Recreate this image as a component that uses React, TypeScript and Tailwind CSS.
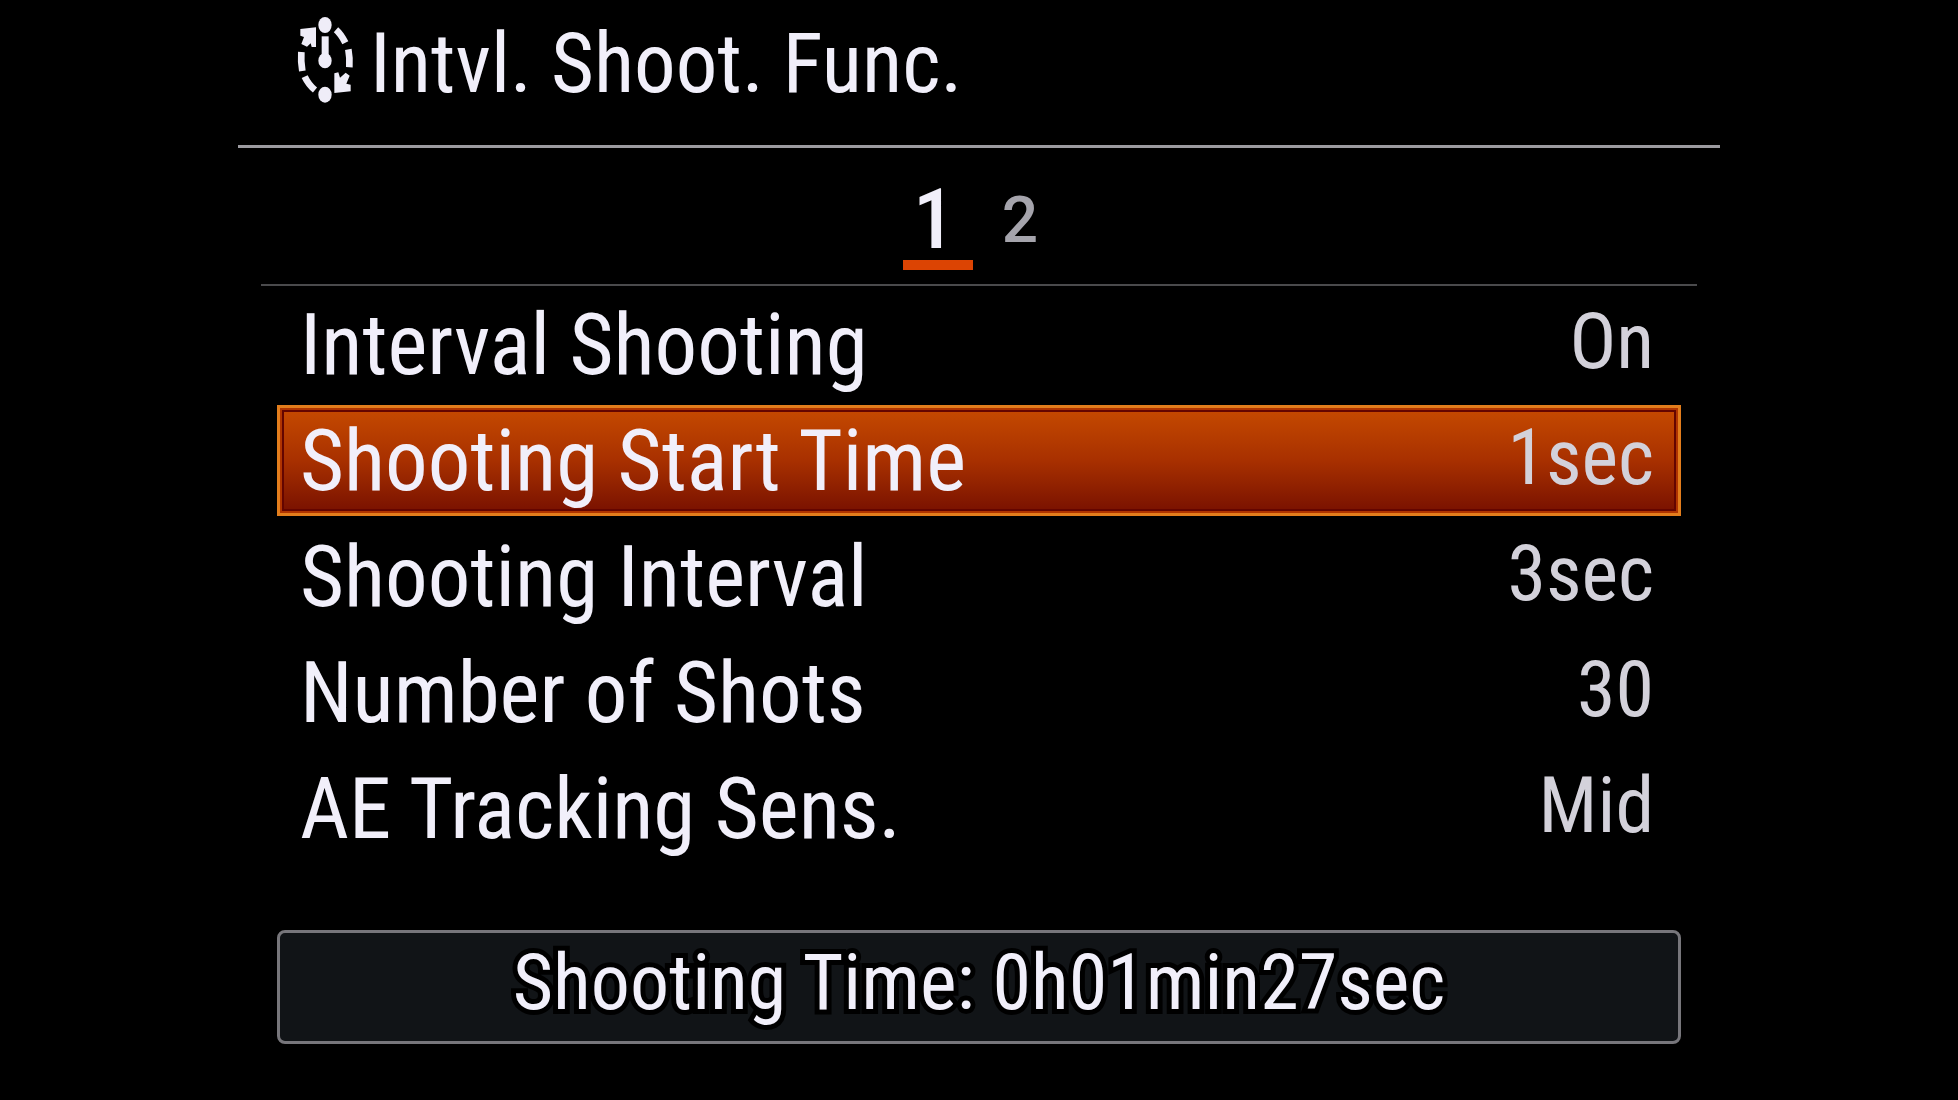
const rows = [
  { label: "Interval Shooting", value: "On" },
  { label: "Shooting Start Time", value: "1sec", selected: true },
  { label: "Shooting Interval", value: "3sec" },
  { label: "Number of Shots", value: "30" },
  { label: "AE Tracking Sens.", value: "Mid" },
];

function IntervalIcon() {
  return (
    <svg viewBox="50 50 171 264" className="h-[88px] w-[57px] shrink-0" fill="#efedf8" stroke="#efedf8" aria-hidden="true">
      <g stroke="none">
        <ellipse cx="134" cy="77" rx="20" ry="24" />
        <ellipse cx="134" cy="184" rx="20" ry="23" />
        <ellipse cx="134" cy="286" rx="20" ry="24" />
        <rect x="124" y="111" width="21" height="70" />
        <path d="M60 89 L107 84 V143 H94 L91 132 L80 142 L63 134 L71 113 L60 109 Z" />
        <path d="M162 281 V222 L174 219 L179 235 L196 220 L208 229 L198 253 L211 256 V276 Z" />
      </g>
      <g fill="none" strokeWidth="20">
        <path d="M167 91 Q182 104 195 130" />
        <path d="M204 150 Q209 176 207 204" />
        <path d="M63 158 Q61 186 66 215" />
        <path d="M73 232 Q85 257 104 272" />
      </g>
    </svg>
  );
}

export default function App() {
  return (
    <main className="flex min-h-screen flex-col items-center bg-black font-['Roboto_Condensed','Roboto',sans-serif] text-[#f1effa]">
      <div className="w-[75.7%]">
        <header className="flex h-[148px] items-start gap-4 border-b-3 border-[#9c9ba0] pt-4 pl-[59px]">
          <IntervalIcon />
          <h1 className="text-[83px] leading-[96px]">Intvl. Shoot. Func.</h1>
        </header>

        <nav className="mx-[23px] flex h-[138px] items-start justify-center gap-3 border-b-2 border-[#4a4a4c] pt-8" aria-label="Pages">
          <button type="button" aria-current="page" className="w-[70px] border-b-10 border-[#dc4403] pr-2 text-[84px] leading-[80px] font-medium">
            1
          </button>
          <button type="button" className="w-[70px] font-['Roboto',sans-serif] text-[64px] leading-[82px] font-medium text-[#a5a4ac]">
            2
          </button>
        </nav>

        <ul className="mx-[39px] mt-[3px] flex flex-col gap-[5px]">
          {rows.map((row) => (
            <li key={row.label}>
              <button
                type="button"
                className={
                  row.selected
                    ? "flex h-[111px] w-full items-start justify-between border-3 border-[#e27d1c] bg-linear-to-b from-[#c64a00] via-[#a83000] to-[#781000] pr-6 pl-5 shadow-[inset_0_0_0_2px_#b03400,inset_0_0_0_4px_#640500]"
                    : "flex h-[111px] w-full items-start justify-between border-3 border-transparent pr-6 pl-5"
                }
              >
                <span className="text-[85px] leading-[106px]">{row.label}</span>
                <span className="text-[78px] leading-[100px] text-[#d3d1da]">{row.value}</span>
              </button>
            </li>
          ))}
        </ul>

        <p className="mx-[39px] mt-[66px] h-[114px] rounded-lg border-3 border-[#77767b] bg-[#111417] text-center text-[78px] leading-[100px] [-webkit-text-stroke:10px_black] [paint-order:stroke_fill]">
          Shooting Time: 0h01min27sec
        </p>
      </div>
    </main>
  );
}
